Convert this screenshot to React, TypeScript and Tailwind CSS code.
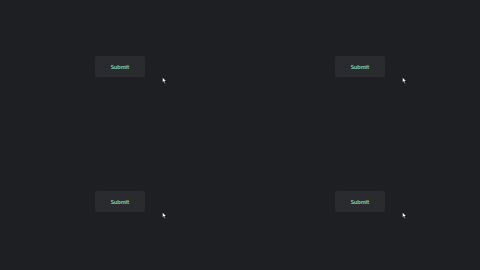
import React from "react";

function Cell() {
  return (
    <div className="relative flex items-center justify-center">
      <div className="relative mb-[2px]">
        <button className="w-[50px] h-[21px] rounded-[2px] bg-[#2a2b2f] text-[#8ee3bb] text-[6px] font-semibold flex items-center justify-center" style={{ fontFamily: "Lato, 'Noto Sans', sans-serif" }}>
          Submit
        </button>
        <svg className="absolute left-[67px] top-[21px]" width="5" height="7" viewBox="0 0 10 14">
          <path d="M1 1 L1 11 L3.5 8.8 L5.5 13 L7 12.3 L5 8.2 L8.5 8 Z" fill="#ffffff" stroke="#000" strokeWidth="0.8" />
        </svg>
      </div>
    </div>
  );
}

export default function App() {
  return (
    <div className="w-[480px] h-[270px] bg-[#1e1f22] grid grid-cols-2 grid-rows-2">
      <Cell />
      <Cell />
      <Cell />
      <Cell />
    </div>
  );
}
